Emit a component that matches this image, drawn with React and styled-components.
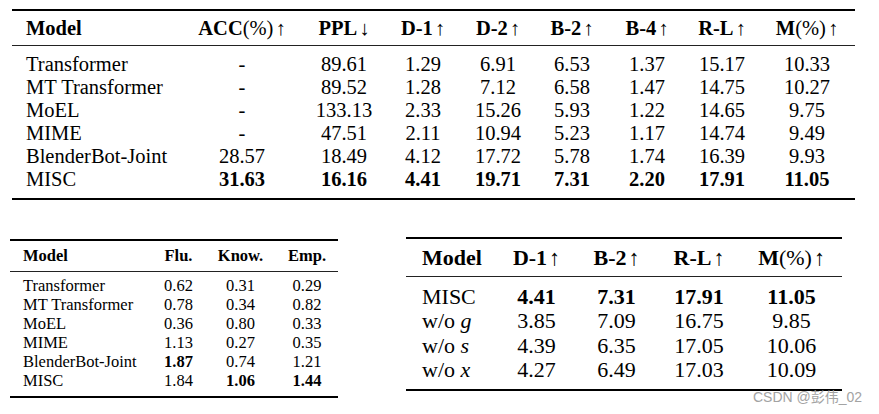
import React from 'react';
import styled, { createGlobalStyle } from 'styled-components';

const Global = createGlobalStyle`
  html, body { margin: 0; padding: 0; background: #fff; }
  body { font-family: "Liberation Serif", "Times New Roman", serif; color: #000; }
`;

const Page = styled.div`
  position: relative;
  width: 879px;
  height: 414px;
  box-sizing: border-box;
  padding-top: 9px;
  overflow: hidden;
`;

const BottomRow = styled.div`
  display: flex;
  align-items: flex-start;
  margin-top: 37px;
`;

const Table = styled.div`
  width: ${(p) => p.$width}px;
  margin-left: ${(p) => p.$left}px;
  margin-top: ${(p) => p.$top || 0}px;
  border-top: 2px solid #000;
  border-bottom: 2px solid #000;
  font-size: ${(p) => p.$fs}px;
`;

const Row = styled.div`
  display: grid;
  grid-template-columns: ${(p) => p.$cols};
  height: ${(p) => p.$h}px;
  line-height: ${(p) => p.$h}px;
  white-space: nowrap;
`;

const HeadRow = styled(Row)`
  border-bottom: 1px solid #222;
  font-weight: bold;
`;

const Body = styled.div`
  padding-top: ${(p) => p.$pt}px;
  padding-bottom: ${(p) => p.$pb}px;
`;

const Cell = styled.div`
  text-align: center;
  font-weight: ${(p) => (p.$bold ? 'bold' : 'inherit')};
  &:first-child {
    text-align: left;
    padding-left: ${(p) => p.$pad}px;
  }
`;

const Plain = styled.span`
  font-weight: normal;
`;

const Arrow = styled.span`
  font-family: "Liberation Serif", "DejaVu Serif", serif;
  font-weight: normal;
  color: #000;
  margin-left: 2px;
`;

const MathVar = styled.i`
  font-style: italic;
`;

const Watermark = styled.div`
  position: absolute;
  left: 753px;
  top: 388px;
  font-family: "Liberation Sans", "Noto Sans CJK SC", sans-serif;
  font-size: 14px;
  line-height: 18px;
  color: #a3a3a3;
  white-space: nowrap;
`;

const up = <Arrow>↑</Arrow>;
const down = <Arrow>↓</Arrow>;

function DataTable({ cfg, head, rows }) {
  const cols = cfg.cols.map((c) => `${c}px`).join(' ');
  return (
    <Table $width={cfg.width} $left={cfg.left} $top={cfg.top} $fs={cfg.fs}>
      <HeadRow $cols={cols} $h={cfg.headH}>
        {head.map((h, i) => (
          <Cell key={i} $pad={cfg.pad}>{h}</Cell>
        ))}
      </HeadRow>
      <Body $pt={cfg.pt} $pb={cfg.pb}>
        {rows.map((r, ri) => (
          <Row key={ri} $cols={cols} $h={cfg.rowH}>
            {r.map((v, i) => {
              const bold = typeof v === 'string' && v.startsWith('*');
              return (
                <Cell key={i} $pad={cfg.pad} $bold={bold}>
                  {bold ? v.slice(1) : v}
                </Cell>
              );
            })}
          </Row>
        ))}
      </Body>
    </Table>
  );
}

const topCfg = {
  width: 843, left: 12, fs: 20.5, headH: 34, rowH: 23, pt: 6.5, pb: 7.5, pad: 14,
  cols: [169, 122, 82, 76, 74, 74, 76, 74, 96],
};
const topHead = [
  'Model',
  <>ACC<Plain>(%)</Plain>{up}</>,
  <>PPL{down}</>,
  <>D-1{up}</>,
  <>D-2{up}</>,
  <>B-2{up}</>,
  <>B-4{up}</>,
  <>R-L{up}</>,
  <>M<Plain>(%)</Plain>{up}</>,
];
const topRows = [
  ['Transformer', '-', '89.61', '1.29', '6.91', '6.53', '1.37', '15.17', '10.33'],
  ['MT Transformer', '-', '89.52', '1.28', '7.12', '6.58', '1.47', '14.75', '10.27'],
  ['MoEL', '-', '133.13', '2.33', '15.26', '5.93', '1.22', '14.65', '9.75'],
  ['MIME', '-', '47.51', '2.11', '10.94', '5.23', '1.17', '14.74', '9.49'],
  ['BlenderBot-Joint', '28.57', '18.49', '4.12', '17.72', '5.78', '1.74', '16.39', '9.93'],
  ['MISC', '*31.63', '*16.16', '*4.41', '*19.71', '*7.31', '*2.20', '*17.91', '*11.05'],
];

const leftCfg = {
  width: 328, left: 10, top: 2, fs: 16.5, headH: 30, rowH: 19, pt: 3.6, pb: 6.4, pad: 13,
  cols: [142, 53, 71, 62],
};
const leftHead = ['Model', 'Flu.', 'Know.', 'Emp.'];
const leftRows = [
  ['Transformer', '0.62', '0.31', '0.29'],
  ['MT Transformer', '0.78', '0.34', '0.82'],
  ['MoEL', '0.36', '0.80', '0.33'],
  ['MIME', '1.13', '0.27', '0.35'],
  ['BlenderBot-Joint', '*1.87', '0.74', '1.21'],
  ['MISC', '1.84', '*1.06', '*1.44'],
];

const rightCfg = {
  width: 436, left: 68, top: 0, fs: 22, headH: 37, rowH: 24.5, pt: 7.6, pb: 6.4, pad: 16,
  cols: [91, 79, 81, 84, 101],
};
const rightHead = [
  'Model',
  <>D-1{up}</>,
  <>B-2{up}</>,
  <>R-L{up}</>,
  <>M<Plain>(%)</Plain>{up}</>,
];
const rightRows = [
  ['MISC', '*4.41', '*7.31', '*17.91', '*11.05'],
  [<>w/o <MathVar>g</MathVar></>, '3.85', '7.09', '16.75', '9.85'],
  [<>w/o <MathVar>s</MathVar></>, '4.39', '6.35', '17.05', '10.06'],
  [<>w/o <MathVar>x</MathVar></>, '4.27', '6.49', '17.03', '10.09'],
];

export default function App() {
  return (
    <>
      <Global />
      <Page>
        <DataTable cfg={topCfg} head={topHead} rows={topRows} />
        <BottomRow>
          <DataTable cfg={leftCfg} head={leftHead} rows={leftRows} />
          <DataTable cfg={rightCfg} head={rightHead} rows={rightRows} />
        </BottomRow>
        <Watermark>CSDN @彭伟_02</Watermark>
      </Page>
    </>
  );
}
